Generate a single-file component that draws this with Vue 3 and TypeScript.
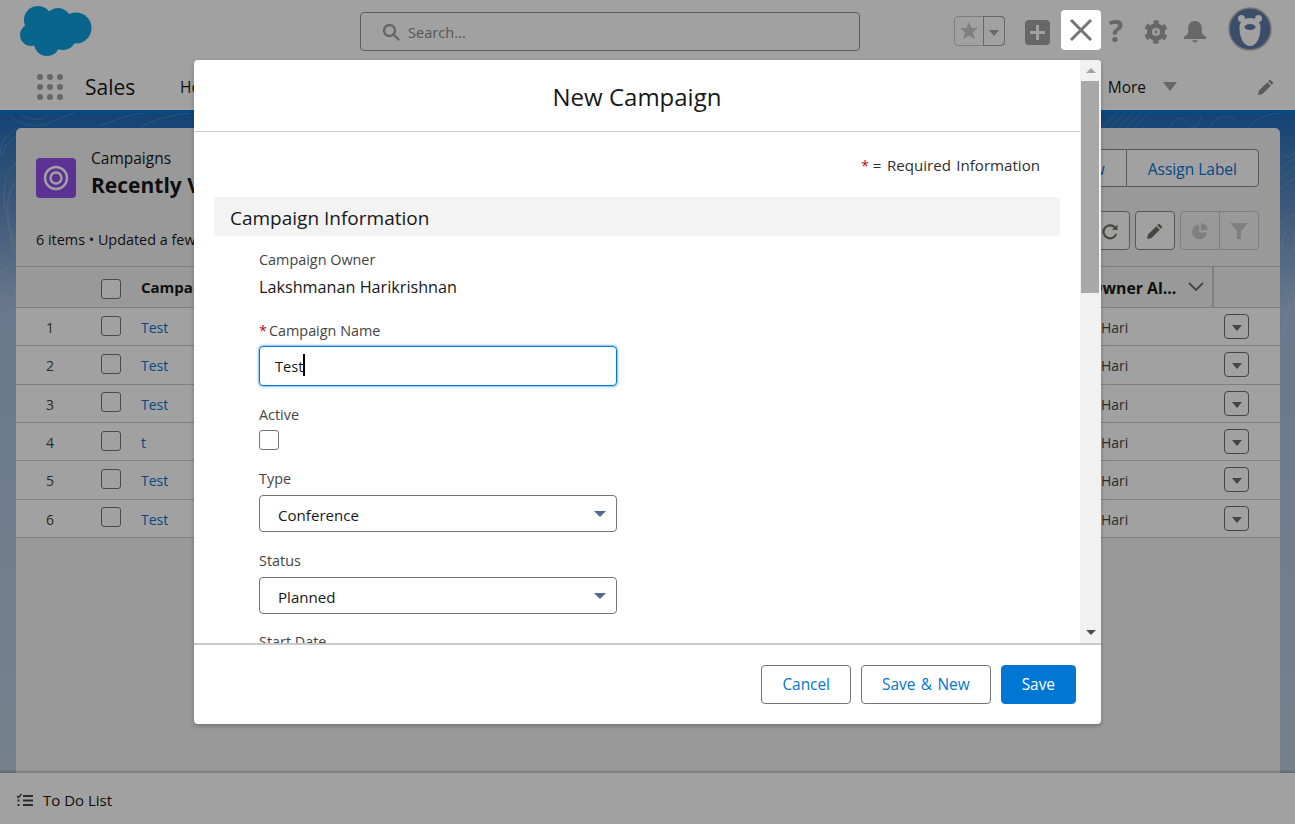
<script setup lang="ts">
const gridDots = Array.from({ length: 9 }, (_, i) => ({ cx: 3 + (i % 3) * 10, cy: 3 + Math.floor(i / 3) * 10 }))
const rows = [
  { n: 1, name: 'Test' },
  { n: 2, name: 'Test' },
  { n: 3, name: 'Test' },
  { n: 4, name: 't' },
  { n: 5, name: 'Test' },
  { n: 6, name: 'Test' },
]
</script>

<template>
  <div class="page">
    <header class="top">
      <svg class="logo" width="72" height="50" viewBox="0 0 72 50">
        <g fill="#11a0e0">
          <circle cx="18" cy="14" r="14" />
          <circle cx="38" cy="15" r="13" />
          <circle cx="56" cy="22" r="15.5" />
          <circle cx="11" cy="29" r="11" />
          <circle cx="27" cy="37" r="13" />
          <circle cx="43" cy="31" r="13" />
          <rect x="12" y="14" width="40" height="20" />
        </g>
      </svg>
      <div class="search">
        <svg width="18" height="18" viewBox="0 0 18 18" fill="none" stroke="#a3a3a3" stroke-width="2.4">
          <circle cx="7.5" cy="7.5" r="5.5" />
          <path d="M11.5 11.5 L16.5 16.5" stroke-linecap="round" />
        </svg>
        <span>Search...</span>
      </div>
      <div class="tools">
        <div class="fav">
          <span class="fav-star">
            <svg width="20" height="20" viewBox="0 0 20 20"><path fill="#c9c9c9" d="M10 1l2.7 6h6.3l-5 4.3 1.8 6.7-5.8-3.6-5.8 3.6 1.8-6.7-5-4.3h6.3z" /></svg>
          </span>
          <span class="fav-caret"><i class="tri" /></span>
        </div>
        <span class="plus">
          <svg width="17" height="17" viewBox="0 0 17 17"><path fill="#fff" d="M7 1h3v6h6v3h-6v6H7v-6H1V7h6z" /></svg>
        </span>
        <span class="help">?</span>
        <svg class="gear" width="24" height="24" viewBox="0 0 24 24">
          <circle cx="12" cy="12" r="6.5" fill="none" stroke="#a3a3a3" stroke-width="5" />
          <circle cx="12" cy="12" r="10" fill="none" stroke="#a3a3a3" stroke-width="3.4" stroke-dasharray="5.4 5.07" stroke-dashoffset="2.7" transform="rotate(-90 12 12)" />
          <path fill="#a3a3a3" d="M12.800 8.500l-2.800 4h1.800l-.8 3 3-4.200h-1.800z" />
        </svg>
        <svg class="bell" width="24" height="24" viewBox="0 0 24 24">
          <path fill="#a3a3a3" d="M12 1c-4.200 0-6.800 3-6.800 7v4c0 2-1.800 3.300-4.200 4.800V19h22v-2.200C20.600 15.300 18.800 14 18.800 12V8c0-4-2.600-7-6.800-7z" />
          <path fill="#a3a3a3" d="M9.200 20.300h5.600c-.3 1.300-1.400 2.200-2.800 2.200s-2.500-.9-2.800-2.200z" />
        </svg>
        <svg class="avatar" width="44" height="44" viewBox="0 0 44 44">
          <circle cx="22" cy="22" r="21" fill="#5f7aa8" stroke="#bdbdbd" stroke-width="1.500" />
          <circle cx="13.500" cy="11.500" r="3.500" fill="#fff" />
          <circle cx="30.500" cy="11.500" r="3.500" fill="#fff" />
          <path fill="#fff" d="M22 11c7 0 11 4 10.500 11-.5 9-4 17-10.500 17s-10-8-10.500-17C11 15 15 11 22 11z" />
          <ellipse cx="22" cy="20" rx="5.500" ry="3" fill="#5f7aa8" />
        </svg>
      </div>
    </header>

    <nav class="nav">
      <svg class="waffle" width="26" height="26" viewBox="0 0 26 26">
        <circle v-for="(d, i) in gridDots" :key="i" :cx="d.cx" :cy="d.cy" r="3" fill="#a3a3a3" />
      </svg>
      <span class="app">Sales</span>
      <span class="nav-item">Home</span>
      <span class="nav-more">More</span>
      <i class="tri nav-tri" />
      <svg class="nav-pen" width="18" height="18" viewBox="0 0 18 18"><path fill="#909090" d="M13 1.500l3.500 3.500-1.800 1.800-3.500-3.500zM10.300 4.200l3.500 3.500-8.300 8.300-4.500 1 1-4.500z" /></svg>
    </nav>

    <main class="main">
      <svg class="contour" width="1295" height="660" viewBox="0 0 1295 660" fill="none" stroke="#fff" stroke-opacity=".16">
        <path d="M10 3c10 10 30 12 42 6s20-8 24-9M20 1c8 6 20 7 26 3M100 13c20-8 32-12 44-13M140 14c16-8 30-12 50-14" />
        <path d="M1102 14l16-14M1110 14l16-14M1118 14l16-14M1126 14l16-14M1134 14l16-14M1170 14c6-10 12-12 18-4s10 4 14-8M1210 14c8-12 18-14 26-6M1250 14c6-8 14-12 30-14" />
        <path d="M16 50C4 60 2 80 6 100s6 34 10 40M16 70C8 78 6 92 9 108s5 22 7 26M16 16C6 22 0 30 0 44M16 24C8 28 4 34 3 42" />
        <path d="M0 175c6-8 14-6 16 2s-8 12-12 8-8-6-4-10zM0 160c10-8 14-12 16-16M0 210l16-14M0 220l16-14M0 230l16-14M0 244l16-14M0 256l16-14" />
        <path d="M1281 40c6 6 12 4 14-2M1281 56l14-12M1281 66l14-12M1281 76l14-12" />
        <path d="M1285 120c6-10 10 0 10 10s-6 14-10 8-4-12 0-18zM1281 170c8 8 10 20 6 32s-6 24 8 32M1288 170c4 12 8 20 7 30M1281 110c6-4 10-8 14-8" />
      </svg>
      <section class="card">
        <div class="head-row">
          <div class="head-title">
            <span class="camp-icon">
              <svg width="28" height="28" viewBox="0 0 28 28" fill="none" stroke="#fff" stroke-width="2.400">
                <circle cx="14" cy="14" r="11" /><circle cx="14" cy="14" r="5.500" />
              </svg>
            </span>
            <div>
              <div class="crumb">Campaigns</div>
              <div class="view">Recently Viewed</div>
            </div>
          </div>
          <div class="btn-group">
            <span class="group-btn">New</span>
            <span class="group-btn">Assign Label</span>
          </div>
        </div>
        <div class="tool-row">
          <span class="meta">6 items • Updated a few seconds ago</span>
          <div class="list-tools">
            <span class="sq">
              <svg width="18" height="18" viewBox="0 0 18 18" fill="none" stroke="#706e6b" stroke-width="2.200">
                <path d="M15.200 12A6.500 6.500 0 1 1 12.500 4.300l2 2" /><path fill="#706e6b" stroke="none" d="M16.500 2.500v5.500h-5.500z" />
              </svg>
            </span>
            <span class="sq">
              <svg width="18" height="18" viewBox="0 0 18 18"><path fill="#706e6b" d="M13 1.500l3.500 3.500-1.800 1.800-3.500-3.500zM10.300 4.200l3.500 3.500-8.300 8.300-4.500 1 1-4.500z" /></svg>
            </span>
            <div class="off-group">
              <span class="off">
                <svg width="18" height="18" viewBox="0 0 18 18"><path fill="#c9c9c9" d="M8 2.500v8h8A7.500 7.500 0 1 1 8 2.500zM10 1a7.500 7.500 0 0 1 7 7l-7 .5z" /></svg>
              </span>
              <span class="off">
                <svg width="20" height="20" viewBox="0 0 20 20"><path fill="#c9c9c9" d="M1 2h18l-7 8v8h-4v-8z" /></svg>
              </span>
            </div>
          </div>
        </div>
        <div class="table">
          <div class="tr th">
            <span class="c-num" />
            <span class="c-check"><i class="box" /></span>
            <span class="c-name">Campaign Name</span>
            <span class="c-owner">
              <span class="owner-text">Owner Al...</span>
              <svg width="16" height="10" viewBox="0 0 16 10" fill="none" stroke="#706e6b" stroke-width="1.800"><path d="M1 1l7 7 7-7" /></svg>
            </span>
            <span class="c-act" />
          </div>
          <div v-for="r in rows" :key="r.n" class="tr">
            <span class="c-num">{{ r.n }}</span>
            <span class="c-check"><i class="box" /></span>
            <span class="c-name link">{{ r.name }}</span>
            <span class="c-owner plain">Hari</span>
            <span class="c-act"><span class="act-btn"><i class="tri small" /></span></span>
          </div>
        </div>
      </section>
    </main>

    <footer class="todo">
      <svg width="18" height="14" viewBox="0 0 18 14">
        <path fill="none" stroke="#444" stroke-width="1.500" d="M1 3l1.500 1.500L5.500 1" />
        <path fill="#444" d="M7 2h10v2H7zM7 6.500h10v2H7zM7 11h10v2H7zM1.500 6.500h2v2h-2zM1.500 11h2v2h-2z" />
      </svg>
      <span>To Do List</span>
    </footer>

    <div class="backdrop" />
    <button class="close" type="button" aria-label="Close">
      <svg width="24" height="24" viewBox="0 0 24 24" fill="none" stroke="#747474" stroke-width="3"><path d="M2 2l20 20M22 2L2 22" /></svg>
    </button>

    <div class="modal">
      <div class="modal-top">
        <div class="modal-main">
          <div class="modal-head">New Campaign</div>
          <div class="modal-body">
            <div class="req-note"><span class="star">*</span>= Required Information</div>
            <div class="section">Campaign Information</div>
            <div class="form">
              <div class="label first">Campaign Owner</div>
              <div class="value">Lakshmanan Harikrishnan</div>
              <div class="label name-label"><span class="star">*</span>Campaign Name</div>
              <div class="input">Test<i class="cursor" /></div>
              <div class="label">Active</div>
              <i class="box active-box" />
              <div class="label">Type</div>
              <div class="select">Conference<i class="tri blue" /></div>
              <div class="label">Status</div>
              <div class="select">Planned<i class="tri blue" /></div>
              <div class="label last">Start Date</div>
            </div>
          </div>
        </div>
        <div class="scrollbar">
          <span class="sb-arrow"><i class="tri up" /></span>
          <span class="sb-thumb" />
          <span class="sb-rest" />
          <span class="sb-arrow"><i class="tri dark" /></span>
        </div>
      </div>
      <div class="modal-foot">
        <button class="btn" type="button">Cancel</button>
        <button class="btn" type="button">Save &amp; New</button>
        <button class="btn primary" type="button">Save</button>
      </div>
    </div>
  </div>
</template>

<style>
html, body { margin: 0; }
</style>

<style scoped>
.page {
  position: relative;
  width: 1295px;
  height: 824px;
  overflow: hidden;
  display: flex;
  flex-direction: column;
  font-family: "Open Sans", "Noto Sans", "Liberation Sans", sans-serif;
  color: #181818;
  background: #fff;
}
i { display: block; font-style: normal; }

.top {
  height: 68px;
  flex: none;
  display: grid;
  grid-template-columns: 360px 500px 1fr;
  align-items: start;
  background: #fff;
}
.logo { margin: 6px 0 0 20px; }
.search {
  margin-top: 12px;
  height: 39px;
  box-sizing: border-box;
  border: 1px solid #969696;
  border-radius: 4px;
  display: flex;
  align-items: center;
  gap: 8px;
  padding: 1px 0 0 21px;
  font-size: 14.6px;
  color: #8a8a8a;
}
.tools { display: flex; align-items: flex-start; padding-left: 94px; position: relative; }
.fav {
  margin-top: 16px;
  width: 51px;
  height: 30px;
  box-sizing: border-box;
  display: flex;
  border: 1px solid #c9c9c9;
  border-radius: 4px;
}
.fav-star { width: 28px; display: flex; align-items: center; justify-content: center; }
.fav-caret {
  flex: 1;
  margin: -1px -1px -1px 0;
  border: 1px solid #a3a3a3;
  border-radius: 0 4px 4px 0;
  display: flex;
  align-items: center;
  justify-content: center;
}
.tri {
  width: 0;
  height: 0;
  border-left: 6px solid transparent;
  border-right: 6px solid transparent;
  border-top: 6px solid #a3a3a3;
}
.fav-caret .tri { margin-top: 3px; border-left-width: 5.5px; border-right-width: 5.5px; }
.plus {
  margin: 20px 0 0 20px;
  width: 25px;
  height: 25px;
  background: #a3a3a3;
  border-radius: 4px;
  display: flex;
  align-items: center;
  justify-content: center;
}
.help {
  margin: 11px 0 0 55px;
  width: 22px;
  text-align: center;
  font-size: 30px;
  line-height: 40px;
  font-weight: 700;
  color: #a3a3a3;
}
.gear { margin: 20px 0 0 17px; }
.bell { margin: 20px 0 0 15px; }
.avatar { margin: 7px 0 0 21px; }

.nav {
  height: 38px;
  flex: none;
  display: flex;
  align-items: center;
  background: #fff;
  padding-bottom: 4px;
  border-bottom: 3px solid #0176d3;
}
.waffle { margin-left: 37px; }
.app { margin-left: 22px; font-size: 21px; width: 95px; }
.nav-item { font-size: 15.5px; }
.nav-more { margin-left: auto; font-size: 15.5px; }
.nav-tri { margin-left: 17px; border-left-width: 7px; border-right-width: 7px; border-top-width: 9px; margin-top: -2px; }
.nav-pen { margin: 0 20px 0 80px; }

.main {
  position: relative;
  flex: 1;
  min-height: 0;
  padding: 15px 15px 0 16px;
  display: flex;
  background: linear-gradient(to bottom, #1f6cb8 0, #5f8cc0 14%, #a5c0e0 30%, #bccde0 100%);
}
.contour { position: absolute; left: 0; top: 0; }
.card {
  position: relative;
  flex: 1;
  background: #f3f3f3;
  border-radius: 5px 5px 0 0;
}
.head-row { display: flex; justify-content: space-between; padding: 21px 21px 0 20px; height: 49px; background: transparent; }
.head-title { display: flex; gap: 15px; }
.camp-icon {
  margin-top: 9px;
  width: 40px;
  height: 40px;
  border-radius: 4px;
  background: #9050e9;
  display: flex;
  align-items: center;
  justify-content: center;
}
.crumb { font-size: 15.5px; line-height: 20px; margin-top: -1px; }
.view { font-size: 21px; font-weight: 700; line-height: 32px; margin-top: 1px; white-space: nowrap; }
.btn-group { display: flex; height: 38px; }
.group-btn {
  height: 38px;
  box-sizing: border-box;
  border: 1px solid #8a8a8a;
  background: #fff;
  color: #0176d3;
  font-size: 15.5px;
  line-height: 38px;
  padding: 0 21px;
}
.group-btn:first-child { border-radius: 4px 0 0 4px; border-right: 0; }
.group-btn:last-child { border-radius: 0 4px 4px 0; }
.tool-row {
  display: flex;
  justify-content: space-between;
  align-items: center;
  height: 39px;
  margin-top: 13px;
  padding: 0 21px 0 20px;
}
.meta { font-size: 14.4px; padding-top: 17px; white-space: nowrap; }
.list-tools { display: flex; gap: 5px; }
.sq {
  width: 40px;
  height: 39px;
  box-sizing: border-box;
  border: 1px solid #8a8a8a;
  border-radius: 4px;
  background: #fff;
  display: flex;
  align-items: center;
  justify-content: center;
}
.off-group { display: flex; width: 79px; height: 39px; box-sizing: border-box; border: 1px solid #c9c9c9; border-radius: 4px; }
.off { flex: 1; display: flex; align-items: center; justify-content: center; }
.off:first-child { border-right: 1px solid #c9c9c9; }

.table { margin-top: 16px; border-top: 1px solid #c9c9c9; }
.tr {
  height: 38.33px;
  box-sizing: border-box;
  display: flex;
  align-items: center;
  padding-top: 2px;
  background: #fff;
  border-bottom: 1px solid #c9c9c9;
  font-size: 14px;
}
.th { height: 41px; padding-top: 0; background: #f3f3f3; font-weight: 700; font-size: 15px; }
.c-num { width: 68px; text-align: center; color: #444; }
.c-check { width: 57px; padding-left: 17px; box-sizing: border-box; margin-top: -4px; }
.th .c-check { margin-top: 3px; }
.box {
  width: 20px;
  height: 20px;
  box-sizing: border-box;
  border: 1px solid #747474;
  border-radius: 3px;
  background: #fff;
}
.c-name { flex: 1; white-space: nowrap; }
.link { color: #0176d3; }
.c-owner { width: 112px; display: flex; align-items: center; height: 100%; box-sizing: border-box; }
.owner-text { width: 98px; margin-left: -12px; padding-top: 1px; flex: none; white-space: nowrap; font-size: 15.8px; }
.th .c-owner { border-right: 2px solid #c9c9c9; }
.c-owner.plain { color: #444; margin-left: -1px; margin-right: 1px; }
.c-act { width: 66px; padding-left: 10px; box-sizing: border-box; }
.act-btn {
  width: 25px;
  height: 25px;
  margin-top: -2px;
  box-sizing: border-box;
  border: 1px solid #706e6b;
  border-radius: 4px;
  background: #fff;
  display: flex;
  align-items: center;
  justify-content: center;
}
.tri.small { margin-top: 3px; border-left-width: 5.5px; border-right-width: 5.5px; border-top-color: #706e6b; }

.todo {
  flex: none;
  height: 51px;
  box-sizing: border-box;
  display: flex;
  align-items: center;
  gap: 9px;
  padding: 2px 0 0 16px;
  background: #fff;
  box-shadow: 0 -2px 2px rgba(0, 0, 0, .2);
  position: relative;
  font-size: 15px;
}

.backdrop { position: absolute; inset: 0; background: rgba(0, 0, 0, .37); }
.close {
  position: absolute;
  left: 1061px;
  top: 10px;
  width: 40px;
  height: 40px;
  padding: 0;
  border: 0;
  border-radius: 4px;
  background: #fff;
  display: flex;
  align-items: center;
  justify-content: center;
}
.modal {
  position: absolute;
  left: 194px;
  top: 60px;
  width: 907px;
  height: 664px;
  background: #fff;
  border-radius: 4px;
  box-shadow: 0 2px 4px rgba(0, 0, 0, .25);
  display: flex;
  flex-direction: column;
  overflow: hidden;
}
.modal-top { height: 583px; display: flex; flex: none; }
.modal-main { flex: 1; min-width: 0; overflow: hidden; }
.modal-head {
  height: 71px;
  border-bottom: 1px solid #c9c9c9;
  font-size: 24px;
  line-height: 74px;
  text-align: center;
}
.modal-body { padding: 21px 20px 0; }
.req-note { text-align: right; padding-right: 20px; font-size: 15.1px; word-spacing: 1.5px; line-height: 24px; color: #2e2e2e; }
.req-note .star { margin-right: 4px; font-size: 14px; }
.star { color: #ba0517; margin-right: 2px; }
.section {
  margin-top: 19px;
  height: 39px;
  padding-left: 16px;
  border-radius: 4px;
  background: #f3f3f3;
  font-size: 19px;
  line-height: 42px;
}
.form { padding-left: 45px; }
.label {
  margin-top: 18px;
  margin-bottom: -1px;
  padding-top: 1px;
  font-size: 14.4px;
  line-height: 20px;
  color: #444;
}
.label.first { margin-top: 13px; }
.label.name-label { margin-top: 21px; }
.label.last { margin-top: 17px; }
.value { margin-top: 6px; font-size: 16.2px; line-height: 24px; }
.input {
  margin-top: 6px;
  width: 358px;
  height: 40px;
  box-sizing: border-box;
  border: 1px solid #0176d3;
  border-radius: 4px;
  box-shadow: 0 0 3px #0176d3;
  padding-left: 15px;
  font-size: 14.6px;
  line-height: 38px;
  display: flex;
}
.cursor { width: 2px; height: 22px; margin-top: 7px; background: #000; }
.active-box { margin-top: 6px; }
.select {
  margin-top: 7px;
  width: 358px;
  height: 37px;
  box-sizing: border-box;
  border: 1px solid #747474;
  border-radius: 4px;
  padding-left: 18px;
  font-size: 15.1px;
  line-height: 39px;
  position: relative;
}
.tri.blue {
  position: absolute;
  right: 10px;
  top: 15px;
  border-left-width: 6.5px;
  border-right-width: 6.5px;
  border-top-color: #4f6a92;
}
.scrollbar {
  width: 21px;
  flex: none;
  display: flex;
  flex-direction: column;
  background: #f1f1f1;
}
.sb-arrow { height: 21px; flex: none; display: flex; align-items: center; justify-content: center; }
.sb-thumb { height: 212px; margin: 0 2px 0 1px; flex: none; background: #a8a8a8; }
.sb-rest { flex: 1; }
.tri.up { border-top: 0; border-bottom: 5px solid #a3a3a3; border-left-width: 5px; border-right-width: 5px; }
.tri.dark { border-top: 5px solid #505050; border-left-width: 5px; border-right-width: 5px; }
.modal-foot {
  flex: 1;
  border-top: 2px solid #c9c9c9;
  display: flex;
  justify-content: flex-end;
  gap: 10px;
  padding: 20px 25px 0 0;
}
.btn {
  height: 39px;
  box-sizing: border-box;
  padding: 0 20px;
  border: 1px solid #747474;
  border-radius: 4px;
  background: #fff;
  color: #0176d3;
  font: inherit;
  font-size: 15.4px;
  word-spacing: 1.5px;
}
.btn.primary { background: #0176d3; border-color: #0176d3; color: #fff; }
</style>
